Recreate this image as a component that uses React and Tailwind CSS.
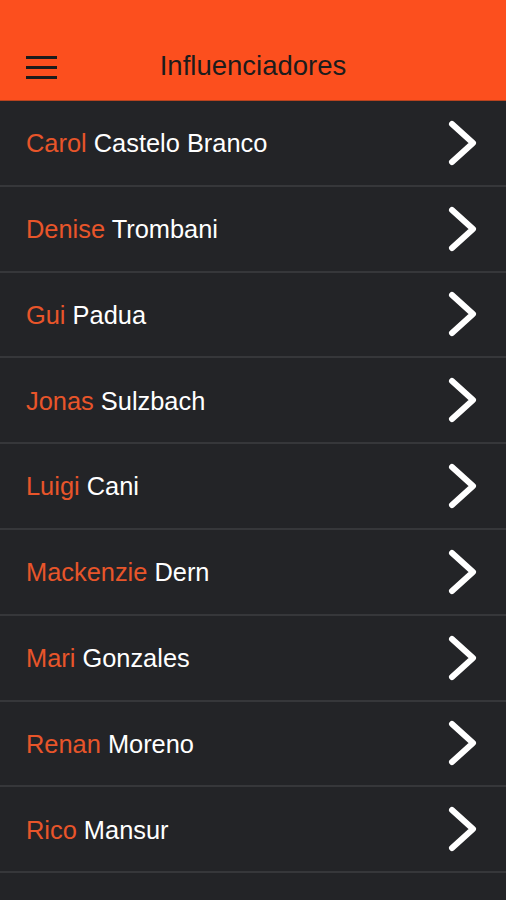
import React from "react";

const people = [
  ["Carol", "Castelo Branco"],
  ["Denise", "Trombani"],
  ["Gui", "Padua"],
  ["Jonas", "Sulzbach"],
  ["Luigi", "Cani"],
  ["Mackenzie", "Dern"],
  ["Mari", "Gonzales"],
  ["Renan", "Moreno"],
  ["Rico", "Mansur"],
];

function Chevron() {
  return (
    <svg width="34" height="48" viewBox="0 0 34 48" className="shrink-0">
      <path d="M6 5 L27 24 L6 43" fill="none" stroke="#ffffff" strokeWidth="6" strokeLinecap="round" strokeLinejoin="round" />
    </svg>
  );
}

export default function App() {
  return (
    <div className="w-[506px] h-[900px] bg-[#232427] overflow-hidden" style={{ fontFamily: '"Liberation Sans", Arial, sans-serif' }}>
      <div className="h-[101px] bg-[#fc4f1e] flex items-end pb-[20px] relative border-b border-[#b8431f]">
        <div className="pl-[26px] flex flex-col gap-[7px] pb-[1px]">
          <div className="w-[31px] h-[3px] bg-[#1c1c1c]" />
          <div className="w-[31px] h-[3px] bg-[#1c1c1c]" />
          <div className="w-[31px] h-[3px] bg-[#1c1c1c]" />
        </div>
        <div className="absolute left-0 right-0 bottom-[21px] text-center text-[27.5px] text-[#1c1c1c] leading-none">Influenciadores</div>
      </div>
      {people.map(([first, last]) => (
        <div key={first} className="h-[85.8px] border-b-2 border-[#36373a] flex items-center justify-between pl-[26px] pr-[26px]">
          <div className="text-[25.4px] leading-none pt-[2px]">
            <span className="text-[#e8552a]">{first}</span>{" "}
            <span className="text-white">{last}</span>
          </div>
          <Chevron />
        </div>
      ))}
    </div>
  );
}
